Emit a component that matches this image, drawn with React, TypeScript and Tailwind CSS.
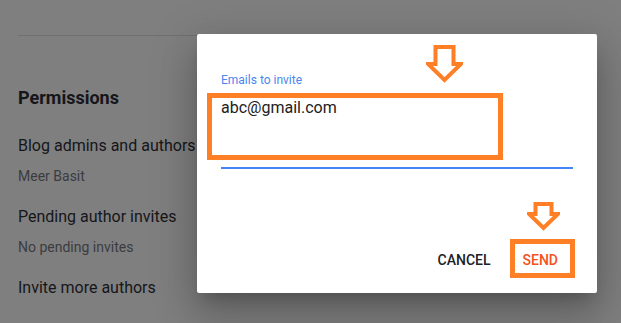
import React from "react";

function DownArrow({ w, h, stem, headY }: { w: number; h: number; stem: number; headY: number }) {
  // outline arrow pointing down, drawn as an annotation
  const c = w / 2;
  const s = 2;
  const pts = [
    [c - stem, s],
    [c + stem, s],
    [c + stem, headY],
    [w - s, headY],
    [c, h - s - 1],
    [s, headY],
    [c - stem, headY],
  ]
    .map((p) => p.join(","))
    .join(" ");
  return (
    <svg width={w} height={h} viewBox={`0 0 ${w} ${h}`} fill="none">
      <polygon points={pts} stroke="#ff7f27" strokeWidth="4" strokeLinejoin="miter" fill="#fff" />
    </svg>
  );
}

export default function App() {
  return (
    <div
      className="relative w-[621px] h-[323px] overflow-hidden bg-[#7f7f7f]"
      style={{ fontFamily: "Roboto, 'Liberation Sans', sans-serif" }}
    >
      {/* dimmed settings page behind the dialog */}
      <div className="flex flex-col pl-[18px] pt-[35px]">
        <div className="h-px w-[190px] bg-[#707070]" />
        <h2 className="mt-[50px] text-[18px] leading-[24px] font-bold text-[#15161a]">Permissions</h2>
        <div className="mt-[24px] flex flex-col gap-[19px]">
          {[
            ["Blog admins and authors", "Meer Basit"],
            ["Pending author invites", "No pending invites"],
            ["Invite more authors", ""],
            ["Readers", ""],
          ].map(([title, sub]) => (
            <div key={title} className="flex flex-col gap-[8px]">
              <div className="text-[16px] leading-[24px] text-[#15161a] whitespace-nowrap">{title}</div>
              {sub && <div className="text-[14px] leading-[20px] text-[#3b3c3f]">{sub}</div>}
            </div>
          ))}
        </div>
      </div>

      {/* invite dialog */}
      <div className="absolute left-[197px] top-[34px] w-[400px] h-[259px] flex flex-col bg-white rounded-[2px] shadow-[0_11px_15px_-7px_rgba(0,0,0,0.2),0_24px_38px_3px_rgba(0,0,0,0.14),0_9px_46px_8px_rgba(0,0,0,0.12)]">
        <div className="px-[24px] pt-[38px]">
          <label className="block text-[12px] leading-[16px] text-[#4a86f0]">Emails to invite</label>
          <div className="mt-[8px] h-[71px] text-[16px] leading-[24px] text-[#212121]">abc@gmail.com</div>
          <div className="h-[2px] bg-[#4285f4]" />
        </div>

        <div className="mt-auto flex justify-end pr-[23px] pb-[15px]">
          <button className="h-[36px] px-[16px] text-[14px] font-medium text-[#202124]">CANCEL</button>
          <button className="h-[36px] px-[16px] text-[14px] font-medium text-[#f4511e]">SEND</button>
        </div>

        {/* orange annotations */}
        <div className="absolute left-[10px] top-[59px] w-[296px] h-[67px] border-[5px] border-[#ff7f27]" />
        <div className="absolute left-[229px] top-[11px]">
          <DownArrow w={37} h={38} stem={9} headY={19} />
        </div>
        <div className="absolute left-[313px] top-[205px] w-[65px] h-[39px] border-[5px] border-[#ff7f27]" />
        <div className="absolute left-[330px] top-[168px]">
          <DownArrow w={33} h={29} stem={8} headY={12} />
        </div>
      </div>
    </div>
  );
}
